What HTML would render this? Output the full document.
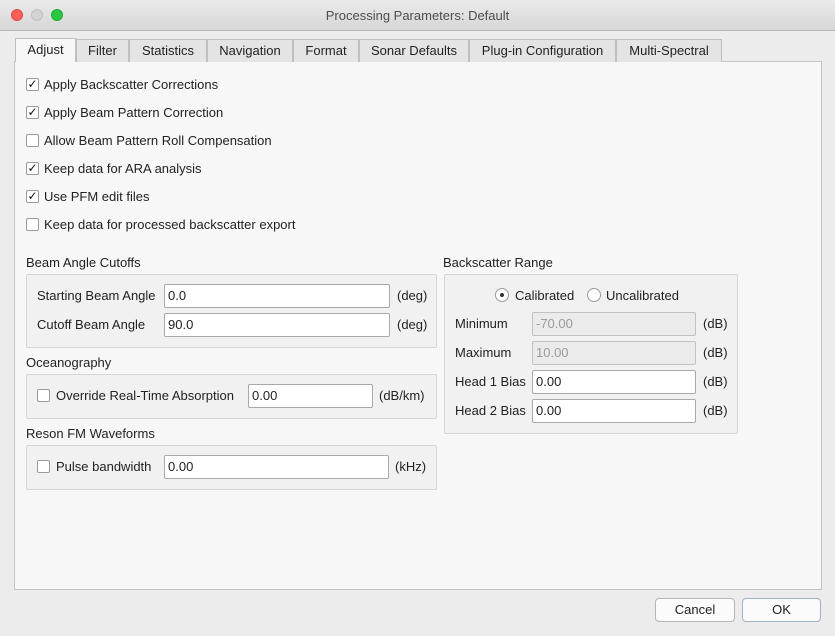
<!DOCTYPE html>
<html><head><style>
*{box-sizing:border-box;margin:0;padding:0}
body{width:835px;height:636px;background:#ececec;font-family:"Liberation Sans",sans-serif;font-size:13px;color:#222;position:relative;overflow:hidden}
.a{position:absolute;white-space:nowrap}
.title{left:0;top:0;width:835px;height:31px;background:linear-gradient(#ebebeb,#d6d6d6);border-bottom:1px solid #b8b8b8;text-align:center;line-height:31px;color:#4d4d4d;font-size:13px}
.dot{position:absolute;top:9px;width:12px;height:12px;border-radius:50%}
.tab{position:absolute;top:39px;height:23px;background:#e4e4e4;border:1px solid #bfbfbf;border-bottom:none;text-align:center;line-height:22px}
.pane{left:14px;top:61px;width:808px;height:529px;background:#f7f7f7;border:1px solid #c4c4c4}
.cb{position:absolute;width:13px;height:13px;border:1px solid #9a9a9a;background:#fff;border-radius:2px;font-size:12px;line-height:11px;text-align:center;color:#111}
.grp{position:absolute;border:1px solid #d6d6d6;background:#f1f1f1;border-radius:2px}
.in{position:absolute;height:24px;border:1px solid #a9a9a9;background:#fff;padding-left:3px;line-height:22px;border-radius:2px}
.dis{background:#ebebeb;color:#9a9a9a;border-color:#c2c2c2}
.rd{position:absolute;width:14px;height:14px;border-radius:50%;border:1px solid #9a9a9a;background:#fff}
.btn{position:absolute;top:598px;height:24px;border:1px solid #b5b5b5;background:#fbfbfb;border-radius:4px;text-align:center;line-height:22px}
</style></head><body>
<div class="a title">Processing Parameters: Default
<div class="dot" style="left:11px;background:#fc5f57;border:1px solid #de4a42"></div>
<div class="dot" style="left:31px;background:#d3d3d3;border:1px solid #c0c0c0"></div>
<div class="dot" style="left:51px;background:#2ac93f;border:1px solid #1eaa2e"></div>
</div>
<div class="a pane"></div>
<div class="tab" style="left:15px;width:61px;background:#f7f7f7;top:38px;height:24px">Adjust</div>
<div class="tab" style="left:76px;width:53px">Filter</div>
<div class="tab" style="left:129px;width:78px">Statistics</div>
<div class="tab" style="left:207px;width:86px">Navigation</div>
<div class="tab" style="left:293px;width:66px">Format</div>
<div class="tab" style="left:359px;width:110px">Sonar Defaults</div>
<div class="tab" style="left:469px;width:147px">Plug-in Configuration</div>
<div class="tab" style="left:616px;width:106px">Multi-Spectral</div>

<div class="cb" style="left:26px;top:78px">✓</div><div class="a" style="left:44px;top:77px">Apply Backscatter Corrections</div>
<div class="cb" style="left:26px;top:106px">✓</div><div class="a" style="left:44px;top:105px">Apply Beam Pattern Correction</div>
<div class="cb" style="left:26px;top:134px"></div><div class="a" style="left:44px;top:133px">Allow Beam Pattern Roll Compensation</div>
<div class="cb" style="left:26px;top:162px">✓</div><div class="a" style="left:44px;top:161px">Keep data for ARA analysis</div>
<div class="cb" style="left:26px;top:190px">✓</div><div class="a" style="left:44px;top:189px">Use PFM edit files</div>
<div class="cb" style="left:26px;top:218px"></div><div class="a" style="left:44px;top:217px">Keep data for processed backscatter export</div>

<div class="a" style="left:26px;top:255px">Beam Angle Cutoffs</div>
<div class="grp" style="left:26px;top:274px;width:411px;height:74px"></div>
<div class="a" style="left:37px;top:288px">Starting Beam Angle</div>
<div class="in" style="left:164px;top:284px;width:226px">0.0</div><div class="a" style="left:397px;top:288px">(deg)</div>
<div class="a" style="left:37px;top:317px">Cutoff Beam Angle</div>
<div class="in" style="left:164px;top:313px;width:226px">90.0</div><div class="a" style="left:397px;top:317px">(deg)</div>

<div class="a" style="left:26px;top:355px">Oceanography</div>
<div class="grp" style="left:26px;top:374px;width:411px;height:45px"></div>
<div class="cb" style="left:37px;top:389px"></div><div class="a" style="left:56px;top:388px">Override Real-Time Absorption</div>
<div class="in" style="left:248px;top:384px;width:125px">0.00</div><div class="a" style="left:379px;top:388px">(dB/km)</div>

<div class="a" style="left:26px;top:426px">Reson FM Waveforms</div>
<div class="grp" style="left:26px;top:445px;width:411px;height:45px"></div>
<div class="cb" style="left:37px;top:460px"></div><div class="a" style="left:56px;top:459px">Pulse bandwidth</div>
<div class="in" style="left:164px;top:455px;width:225px">0.00</div><div class="a" style="left:395px;top:459px">(kHz)</div>

<div class="a" style="left:443px;top:255px">Backscatter Range</div>
<div class="grp" style="left:444px;top:274px;width:294px;height:160px"></div>
<div class="rd" style="left:495px;top:288px"><div style="position:absolute;left:4px;top:4px;width:4px;height:4px;border-radius:50%;background:#333"></div></div>
<div class="a" style="left:515px;top:288px">Calibrated</div>
<div class="rd" style="left:587px;top:288px"></div>
<div class="a" style="left:606px;top:288px">Uncalibrated</div>
<div class="a" style="left:455px;top:316px">Minimum</div>
<div class="in dis" style="left:532px;top:312px;width:164px">-70.00</div><div class="a" style="left:703px;top:316px">(dB)</div>
<div class="a" style="left:455px;top:345px">Maximum</div>
<div class="in dis" style="left:532px;top:341px;width:164px">10.00</div><div class="a" style="left:703px;top:345px">(dB)</div>
<div class="a" style="left:455px;top:374px">Head 1 Bias</div>
<div class="in" style="left:532px;top:370px;width:164px">0.00</div><div class="a" style="left:703px;top:374px">(dB)</div>
<div class="a" style="left:455px;top:403px">Head 2 Bias</div>
<div class="in" style="left:532px;top:399px;width:164px">0.00</div><div class="a" style="left:703px;top:403px">(dB)</div>

<div class="btn" style="left:655px;width:80px">Cancel</div>
<div class="btn" style="left:742px;width:79px;border-color:#9fb3c8">OK</div>
</body></html>
